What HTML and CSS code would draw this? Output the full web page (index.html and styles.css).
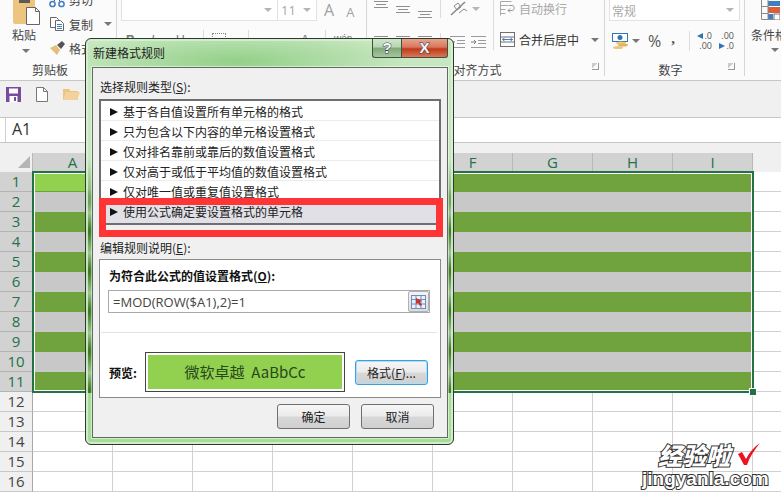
FILE: index.html
```html
<!DOCTYPE html>
<html lang="zh">
<head>
<meta charset="UTF-8">
<title>新建格式规则</title>
<link rel="stylesheet" href="styles.css">
</head>
<body>

<div class="ribbon">
  <div class="group clip-group">
    <div class="group-main clip-main">
      <div class="paste">
        <svg width="30" height="25" viewBox="0 0 30 25"><rect x="1" y="-3" width="22" height="27" rx="2" fill="#eec57f"/><rect x="7" y="-3" width="11" height="6" fill="#5b5b5b"/><path d="M14.5 7.5h9l4 4v13h-13z" fill="#fff" stroke="#666"/><path d="M23.5 7.5v4h4" fill="none" stroke="#666"/></svg>
        <span class="paste-text">粘贴</span>
        <i class="caret"></i>
      </div>
      <div class="clip-list">
        <div class="clip-item clip-cut">
          <svg width="16" height="8" viewBox="0 0 16 8"><circle cx="3.5" cy="4" r="2.6" fill="none" stroke="#3f7ebf" stroke-width="1.5"/><circle cx="12.5" cy="4" r="2.6" fill="none" stroke="#3f7ebf" stroke-width="1.5"/><path d="M5 1l3-3 3 3" fill="none" stroke="#555"/></svg>
          <span>剪切</span>
        </div>
        <div class="clip-item">
          <svg width="16" height="14" viewBox="0 0 16 14"><path d="M1.5.5h6l2 2v8h-8z" fill="#fff" stroke="#666"/><path d="M6.5 3.5h5l3 3v7h-8z" fill="#fff" stroke="#666"/><path d="M8 7.5h5M8 9.5h5M8 11.5h5" stroke="#3f7ebf"/></svg>
          <span>复制</span>
          <i class="caret caret-copy"></i>
        </div>
        <div class="clip-item">
          <svg width="16" height="14" viewBox="0 0 16 14"><path d="M1 7l6-3 4 5-3 5z" fill="#e6bd7c"/><path d="M8 4l5-4 3 3-4 5z" fill="#555"/></svg>
          <span>格式刷</span>
        </div>
      </div>
    </div>
    <div class="group-label clip-label">剪贴板</div>
  </div>

  <div class="group font-group">
    <div class="group-main">
      <div class="font-row">
        <div class="select font-name"><i class="caret caret-light"></i></div>
        <div class="select font-size"><span>11</span><i class="caret caret-light"></i></div>
        <span class="grow big">A</span>
        <span class="grow small">A</span>
      </div>
      <div class="font-row font-row2">
        <b>B</b><em>I</em><u>U</u>
        <span class="pipe pipe-a"></span>
        <span class="dots"></span>
        <span class="pipe pipe-b"></span>
        <span class="bucket">A</span>
        <span class="pipe pipe-c"></span>
        <span class="wen">wén</span>
      </div>
    </div>
    <div class="group-label"></div>
  </div>

  <div class="group align-group">
    <div class="group-main align-main">
      <div class="align-col">
        <div class="align-icons">
          <svg width="58" height="18" viewBox="0 0 58 18"><path d="M0 1.5h14M2 4.5h10M0 7.5h14M22 6.5h14M24 9.5h10M22 12.5h14M44 11.5h14M46 14.5h10M44 17.5h14" stroke="#8f8f8f"/></svg>
        </div>
        <div class="align-icons align-low">
          <svg width="58" height="12" viewBox="0 0 58 12"><path d="M0 1.5h14M22 1.5h14M44 1.5h14" stroke="#8f8f8f"/></svg>
        </div>
      </div>
      <div class="align-col orient-col">
        <div class="orient">
          <svg width="22" height="16" viewBox="0 0 22 16"><path d="M2 14L16 1" stroke="#888" stroke-width="1.5"/><path d="M5 5l4-3 3 4-4 3z" fill="none" stroke="#888"/><path d="M10 12l5-4 3 2" fill="none" stroke="#888"/></svg>
          <i class="caret caret-light"></i>
        </div>
        <div class="indents">
          <svg width="38" height="13" viewBox="0 0 38 13"><path d="M1 1.5h15M8 5.5h8M8 8.5h8M1 12.5h15M22 1.5h15M29 5.5h8M29 8.5h8M22 12.5h15" stroke="#9a9a9a"/><path d="M6 7H1M3 5L1 7l2 2M22 7h5M25 5l2 2-2 2" fill="none" stroke="#7c7c7c"/></svg>
        </div>
      </div>
      <div class="align-col wrap-col">
        <div class="wrap-item wrap-off">
          <svg width="15" height="15" viewBox="0 0 15 15"><path d="M.5.5h11M.5 4.5h8M.5 8.5h5M.5 12.5h5M.5.5v14" fill="none" stroke="#aaa"/><path d="M9 4.5h3c3 0 3 5 0 5H8M10 7.5L8 9.5l2 2" fill="none" stroke="#999"/></svg>
          <span>自动换行</span>
        </div>
        <div class="wrap-item">
          <svg width="15" height="15" viewBox="0 0 15 15"><rect x=".5" y=".5" width="14" height="14" fill="#fff" stroke="#707070"/><path d="M.5 5h14M.5 10h14" stroke="#707070"/><path d="M2.5 7.5h10M4.5 6l-2 1.5 2 1.5M10.500 6l2 1.500-2 1.500" fill="none" stroke="#3f7ebf"/></svg>
          <span>合并后居中</span>
          <i class="caret caret-merge"></i>
        </div>
      </div>
    </div>
    <div class="group-label align-label"><span>对齐方式</span><i class="launcher"></i></div>
  </div>

  <div class="group num-group">
    <div class="group-main">
      <div class="select num-format"><span>常规</span><i class="caret caret-light"></i></div>
      <div class="num-row">
        <svg width="17" height="16" viewBox="0 0 17 16"><rect x=".5" y=".5" width="15" height="8" fill="#fff" stroke="#2f75b5"/><circle cx="8" cy="4.500" r="2.500" fill="#2f75b5"/><ellipse cx="9" cy="10" rx="5" ry="1.500" fill="#eec57f"/><ellipse cx="11" cy="12" rx="5" ry="1.500" fill="#e2b260"/><ellipse cx="6" cy="14.500" rx="5" ry="1.500" fill="#eec57f"/></svg>
        <i class="caret caret-cur"></i>
        <span class="pct">%</span>
        <span class="comma">,</span>
        <span class="pipe num-pipe"></span>
        <span class="dec"><span class="dec-line"><i class="arrow-l"></i>.0</span><span class="dec-line">.00</span></span>
        <span class="dec"><span class="dec-line">.00</span><span class="dec-line"><i class="arrow-r"></i>.0</span></span>
      </div>
    </div>
    <div class="group-label num-label"><span>数字</span><i class="launcher"></i></div>
  </div>

  <div class="group style-group">
    <svg class="cond-icon" width="19" height="20" viewBox="0 0 19 20"><path d="M.5 0v19.500h19" fill="none" stroke="#8a8a8a"/><rect x="7" y="1" width="12" height="5" fill="#3f7ebf"/><rect x="7" y="7" width="12" height="6" fill="#d9603a"/><rect x="7" y="14" width="5" height="5" fill="#3f7ebf"/><path d="M.5 6.500h7M.5 13.500h7M7 0v20" stroke="#8a8a8a"/><rect x="13" y="14" width="6" height="6" fill="#fff" stroke="#777"/></svg>
    <span class="cond-text">条件格式</span>
    <i class="caret"></i>
  </div>
</div>

<div class="qat">
  <svg width="15" height="15" viewBox="0 0 15 15"><path d="M0 0h15v15H0z" fill="#7a4a9e"/><rect x="3" y="1.500" width="9" height="5" fill="#fff"/><rect x="3.500" y="9" width="8" height="6" fill="#fff"/><rect x="8" y="10" width="2" height="4" fill="#7a4a9e"/></svg>
  <svg width="12" height="15" viewBox="0 0 12 15"><path d="M.5.500h7l4 4v10H.5z" fill="#fff" stroke="#777"/><path d="M7.500.500v4h4" fill="none" stroke="#777"/></svg>
  <svg width="17" height="13" viewBox="0 0 17 13"><path d="M0 2h6l1.500 2H15v9H0z" fill="#eec57f"/><path d="M3 5h14l-3 8H0z" fill="#f3d39d"/></svg>
</div>

<div class="fbar"><div class="namebox">A1</div></div>
<div class="fgap"></div>

<div class="sheet">
  <div class="colhead">
    <div class="corner"><i></i></div>
    <span class="col on">A</span><span class="col on">B</span><span class="col on">C</span><span class="col on">D</span><span class="col on">E</span><span class="col on">F</span><span class="col on">G</span><span class="col on">H</span><span class="col on">I</span><span class="col"></span>
  </div>
  <div class="row"><span class="rowhead on">1</span><div class="cells fill-g"><i class="active"></i></div><div class="tail"></div></div>
  <div class="row"><span class="rowhead on">2</span><div class="cells fill-s"></div><div class="tail"></div></div>
  <div class="row"><span class="rowhead on">3</span><div class="cells fill-g"></div><div class="tail"></div></div>
  <div class="row"><span class="rowhead on">4</span><div class="cells fill-s"></div><div class="tail"></div></div>
  <div class="row"><span class="rowhead on">5</span><div class="cells fill-g"></div><div class="tail"></div></div>
  <div class="row"><span class="rowhead on">6</span><div class="cells fill-s"></div><div class="tail"></div></div>
  <div class="row"><span class="rowhead on">7</span><div class="cells fill-g"></div><div class="tail"></div></div>
  <div class="row"><span class="rowhead on">8</span><div class="cells fill-s"></div><div class="tail"></div></div>
  <div class="row"><span class="rowhead on">9</span><div class="cells fill-g"></div><div class="tail"></div></div>
  <div class="row"><span class="rowhead on">10</span><div class="cells fill-s"></div><div class="tail"></div></div>
  <div class="row"><span class="rowhead on">11</span><div class="cells fill-g"></div><div class="tail"></div></div>
  <div class="row"><span class="rowhead">12</span><div class="cells"></div><div class="tail"></div></div>
  <div class="row"><span class="rowhead">13</span><div class="cells"></div><div class="tail"></div></div>
  <div class="row"><span class="rowhead">14</span><div class="cells"></div><div class="tail"></div></div>
  <div class="row"><span class="rowhead">15</span><div class="cells"></div><div class="tail"></div></div>
  <div class="row"><span class="rowhead">16</span><div class="cells"></div><div class="tail"></div></div>
  <div class="selection"><i class="handle"></i></div>
</div>

<div class="dialog">
  <div class="titlebar">
    <span class="title">新建格式规则</span>
    <div class="capbtns">
      <span class="capbtn help">?</span>
      <span class="capbtn close">X</span>
    </div>
  </div>
  <div class="dialog-body">
    <div class="label first-label">选择规则类型(<u>S</u>):</div>
    <div class="rule-list">
      <div class="rule">基于各自值设置所有单元格的格式</div>
      <div class="rule">只为包含以下内容的单元格设置格式</div>
      <div class="rule">仅对排名靠前或靠后的数值设置格式</div>
      <div class="rule">仅对高于或低于平均值的数值设置格式</div>
      <div class="rule">仅对唯一值或重复值设置格式</div>
      <div class="rule rule-on">使用公式确定要设置格式的单元格</div>
    </div>
    <div class="label edit-label">编辑规则说明(<u>E</u>):</div>
    <div class="panel">
      <div class="panel-title">为符合此公式的值设置格式(<u>O</u>):</div>
      <div class="formula">
        <span>=MOD(ROW($A1),2)=1</span>
        <span class="ref-btn">
          <svg width="15" height="14" viewBox="0 0 15 14"><rect x=".5" y=".5" width="14" height="13" fill="#eaf1fa" stroke="#6d8fbe"/><path d="M.5 4.500h14M.5 9h14M5 .5v13M10 .5v13" stroke="#6d8fbe"/><path d="M5 3l6 3-2 1 2 3-2 1-2-3-2 1z" fill="#c8332b"/></svg>
        </span>
      </div>
      <div class="sep"></div>
      <div class="preview-row">
        <span class="preview-label">预览:</span>
        <div class="preview"><div class="preview-fill">微软卓越&nbsp;&nbsp;AaBbCc</div></div>
        <button type="button" class="btn btn-focus">格式(<u>F</u>)...</button>
      </div>
    </div>
    <div class="actions">
      <button type="button" class="btn">确定</button>
      <button type="button" class="btn">取消</button>
    </div>
  </div>
  <div class="redbox"></div>
</div>

<div class="watermark">
  <div class="wm-top">
    <span class="wm-cn">经验啦</span>
    <svg width="24" height="23" viewBox="0 0 24 23"><path d="M1 11l4-2 4 7C12 10 17 4 23 0c-5 6-10 13-13 22H7z" fill="#f01020"/></svg>
  </div>
  <div class="wm-en">jingyanla.com</div>
</div>

</body>
</html>
```

FILE: styles.css
```css
* {
  box-sizing: border-box;
}
html, body {
  margin: 0;
  height: 493px;
  overflow: hidden;
}
body {
  font-family: "Noto Sans CJK SC", "Noto Sans", sans-serif;
  font-size: 12px;
  color: #222;
  background: #fff;
  position: relative;
}
i {
  display: block;
}

/* ribbon */
.ribbon {
  display: flex;
  height: 81px;
  background: #fbfbfb;
  border-bottom: 1px solid #c6c6c6;
  overflow: hidden;
  color: #444;
}
.group {
  height: 76px;
  border-right: 1px solid #d6d6d6;
  flex: none;
}
.group-main {
  height: 63px;
}
.group-label {
  height: 13px;
  line-height: 14px;
  text-align: center;
  position: relative;
}
.clip-label {
  padding-right: 16px;
}
.caret {
  width: 0;
  height: 0;
  border-left: 4px solid transparent;
  border-right: 4px solid transparent;
  border-top: 4px solid #777;
}
.caret-light {
  border-top-color: #b5b5b5;
}
.clip-group {
  width: 117px;
}
.clip-main {
  display: flex;
}
.paste {
  width: 48px;
  padding-left: 12px;
  display: flex;
  flex-direction: column;
}
.paste-text {
  margin-top: 1px;
  line-height: 18px;
  font-size: 12px;
}
.paste .caret {
  margin: 5px 0 0 10px;
}
.clip-list {
  padding-left: 1px;
}
.clip-item {
  display: flex;
  align-items: center;
  gap: 4px;
  height: 14px;
  margin-bottom: 9px;
  white-space: nowrap;
}
.clip-item span {
  width: 26px;
  font-size: 12px;
}
.clip-cut {
  height: 8px;
  margin-bottom: 9px;
  align-items: flex-end;
}
.clip-item:last-child {
  margin-top: 10px;
}
.caret-copy {
  margin-left: 5px;
}
.font-group {
  width: 250px;
  padding-left: 4px;
}
.font-row {
  display: flex;
  height: 21px;
}
.select {
  border: 1px solid #e2e2e2;
  border-top: 0;
  height: 21px;
  background: #fff;
  display: flex;
  align-items: center;
  justify-content: flex-end;
  padding-right: 5px;
}
.font-name {
  width: 157px;
}
.font-size {
  width: 40px;
  margin-left: -1px;
  justify-content: space-between;
  padding-left: 3px;
  color: #a8a8a8;
  font-family: "Open Sans", sans-serif;
  font-size: 13px;
}
.grow {
  color: #a2a2a2;
  font-family: "Open Sans", sans-serif;
  line-height: 20px;
}
.big {
  font-size: 16px;
  margin-left: 7px;
}
.small {
  font-size: 13px;
  margin-left: 12px;
  padding-top: 2px;
}
.font-row2 {
  margin-top: 12px;
  height: 10px;
  align-items: flex-start;
  font-family: "Liberation Sans", sans-serif;
  font-size: 12px;
  color: #777;
}
.font-row2 b, .font-row2 em, .font-row2 u {
  width: 25px;
  padding-left: 5px;
}
.pipe {
  width: 1px;
  height: 20px;
  background: #dcdcdc;
  flex: none;
}
.pipe-a {
  margin: -3px 0 0 7px;
}
.dots {
  width: 14px;
  height: 8px;
  margin: 0 0 0 8px;
  border: 1px dotted #888;
}
.pipe-b {
  margin: -3px 0 0 22px;
}
.bucket {
  margin-left: 52px;
  width: 22px;
}
.pipe-c {
  margin: -3px 0 0 2px;
}
.wen {
  margin-left: 8px;
  font-size: 10px;
}
.align-group {
  width: 238px;
  padding-left: 7px;
}
.align-main {
  display: flex;
}
.align-col {
  height: 50px;
}
.align-icons {
  width: 67px;
  height: 18px;
  border-right: 1px solid #dcdcdc;
}
.align-low {
  margin-top: 15px;
  height: 17px;
}
.orient-col {
  width: 53px;
  border-right: 1px solid #dcdcdc;
  padding-left: 8px;
}
.orient {
  display: flex;
  align-items: center;
  gap: 1px;
  height: 18px;
}
.indents {
  margin-top: 16px;
}
.wrap-col {
  padding-left: 6px;
}
.wrap-item {
  display: flex;
  align-items: center;
  gap: 4px;
  height: 17px;
  white-space: nowrap;
  font-size: 12px;
}
.wrap-item:last-child {
  margin-top: 14px;
  color: #333;
}
.wrap-off {
  color: #a8a8a8;
}
.caret-merge {
  margin-left: 8px;
}
.launcher {
  position: absolute;
  right: 5px;
  top: 0;
  width: 7px;
  height: 7px;
  border-right: 1px solid #999;
  border-bottom: 1px solid #999;
  background: linear-gradient(135deg, #ccc 0 45%, transparent 45%);
}
.align-label {
  padding-right: 23px;
}
.num-group {
  width: 140px;
  padding: 0 4px;
}
.num-label {
  padding-right: 8px;
}
.num-format {
  width: 131px;
  justify-content: space-between;
  padding-left: 2px;
  border-color: #e2e2e2;
  color: #a8a8a8;
  font-size: 12px;
}
.num-row {
  display: flex;
  align-items: center;
  margin-top: 10px;
  padding-left: 3px;
  height: 20px;
}
.caret-cur {
  margin-left: 3px;
}
.pct {
  margin-left: 8px;
  font-family: "Open Sans", sans-serif;
  font-size: 16px;
  color: #555;
}
.comma {
  margin: -5px 0 0 10px;
  font-family: "Liberation Serif", serif;
  font-weight: bold;
  font-size: 15px;
  color: #555;
}
.num-pipe {
  margin-left: 14px;
}
.dec {
  margin-left: 7px;
  width: 15px;
  font-family: "Open Sans", sans-serif;
  font-size: 9px;
  line-height: 10px;
  color: #555;
  text-align: right;
}
.dec-line {
  display: flex;
  justify-content: flex-end;
  align-items: center;
  gap: 1px;
}
.arrow-l, .arrow-r {
  width: 0;
  height: 0;
  border-top: 3px solid transparent;
  border-bottom: 3px solid transparent;
}
.arrow-l {
  border-right: 6px solid #2f75b5;
}
.arrow-r {
  border-left: 6px solid #2f75b5;
}
.style-group {
  border-right: 0;
  padding-left: 6px;
  white-space: nowrap;
}
.cond-icon {
  display: block;
  margin-left: 10px;
}
.cond-text {
  display: block;
  margin-top: 6px;
  line-height: 17px;
}
.style-group .caret {
  margin: 5px 0 0 20px;
}

/* quick access + formula bar */
.qat {
  display: flex;
  align-items: flex-start;
  gap: 15px;
  height: 36px;
  padding: 6px 0 0 6px;
  background: #f0f0f0;
}
.fbar {
  height: 26px;
  background: #fff;
  border-top: 1px solid #c6c6c6;
  border-bottom: 1px solid #c6c6c6;
}
.namebox {
  width: 85px;
  margin-left: 5px;
  height: 24px;
  border-left: 1px solid #d0d0d0;
  padding-left: 6px;
  font-family: "Open Sans", sans-serif;
  font-size: 16px;
  line-height: 23px;
  color: #333;
}
.fgap {
  height: 10px;
  background: #f0f0f0;
}

/* sheet */
.sheet {
  position: relative;
}
.colhead {
  display: flex;
  height: 19px;
  background: #f0f0f0;
}
.corner {
  width: 33px;
  background: #f0f0f0;
  border-right: 1px solid #b8b8b8;
  position: relative;
}
.corner i {
  width: 0;
  height: 0;
  margin: 3px 0 0 18px;
  border-left: 12px solid transparent;
  border-bottom: 12px solid #b5b5b5;
}
.col {
  width: 80px;
  height: 19px;
  flex: none;
  text-align: center;
  font-family: "Open Sans", sans-serif;
  font-size: 15px;
  line-height: 19px;
  border-right: 1px solid #b8b8b8;
}
.col.on {
  background: #d2d2d2;
  color: #217346;
}
.col:last-child {
  border-right: 0;
  flex: 1;
}
.row {
  display: flex;
  height: 20px;
}
.rowhead {
  width: 33px;
  flex: none;
  text-align: center;
  font-family: "Open Sans", sans-serif;
  font-size: 15px;
  line-height: 19px;
  background: #f0f0f0;
  color: #444;
  border-right: 1px solid #a8a8a8;
  border-bottom: 1px solid #c8c8c8;
}
.rowhead.on {
  background: #d2d2d2;
  color: #217346;
  border-bottom-color: #b4b4b4;
}
.cells {
  width: 720px;
  flex: none;
  border-bottom: 1px solid #d0d0d0;
  background-image: linear-gradient(to right, transparent 79px, #d0d0d0 79px);
  background-size: 80px 100%;
}
.tail {
  flex: 1;
  border-bottom: 1px solid #d0d0d0;
}
.fill-g {
  background: #70a33e;
  border-bottom: 0;
}
.fill-s {
  background: #c8c8c8;
  border-bottom: 0;
}
.active {
  width: 80px;
  height: 20px;
  background: #92d050;
  border-bottom: 1px solid #6fa33c;
}
.selection {
  position: absolute;
  left: 32px;
  top: 18px;
  width: 722px;
  height: 222px;
  border: 2px solid #217346;
  box-shadow: inset 0 0 0 1px #fff;
}
.handle {
  position: absolute;
  right: -4px;
  bottom: -4px;
  width: 6px;
  height: 6px;
  background: #217346;
  outline: 1px solid #fff;
}

/* dialog */
.dialog {
  position: absolute;
  left: 85px;
  top: 38px;
  width: 369px;
  height: 407px;
  border: 1px solid #2c3a2c;
  border-radius: 6px;
  padding: 0 5px 6px 6px;
  background-color: #a4dc98;
  background-image:
    linear-gradient(to bottom, #c6e7bf 0, #8fbf83 30px, transparent 46px),
    repeating-linear-gradient(to bottom, #9cc592 0, #3f7f24 16px, #3f7f24 20px, #9cc592 40px),
    radial-gradient(ellipse 170px 30px at 150px 22px, #93d088 0, #b6dfae 70%, #c6e7bf 100%);
  background-repeat: no-repeat;
  background-size: 100% 46px, 100% 220px, 100% 140px;
  background-position: 0 120px, 0 134px, 0 0;
  box-shadow: inset 0 0 0 2px rgba(216, 238, 211, .85);
}
.titlebar {
  display: flex;
  justify-content: space-between;
  height: 28px;
  padding-left: 1px;
}
.title {
  font-size: 12px;
  line-height: 27px;
  color: #222;
}
.capbtns {
  display: flex;
  height: 19px;
  margin-right: 0;
}
.capbtn {
  height: 19px;
  display: block;
  text-align: center;
  font-family: "Liberation Sans", sans-serif;
  font-weight: bold;
  font-size: 15px;
  line-height: 18px;
  color: #f6f6fa;
  -webkit-text-stroke: 1px #3a4050;
  paint-order: stroke fill;
  border: 1px solid #44503f;
  border-top: 0;
}
.help {
  width: 29px;
  border-radius: 0 0 0 3px;
  border-right: 0;
  background: linear-gradient(#cfe6cb 0, #b7d6b1 45%, #7ea778 50%, #a6c6a0 100%);
}
.close {
  width: 47px;
  border-radius: 0 0 3px 0;
  background: linear-gradient(#e6a48f 0, #d9785c 45%, #bf3a17 55%, #d9785c 100%);
}
.dialog-body {
  height: 371px;
  background: #f0f0f0;
  border: 1px solid #5f6b5f;
  padding: 0 6px;
  box-shadow: 0 0 0 1px rgba(255, 255, 255, .5);
}
.label {
  line-height: 16px;
  padding-left: 1px;
  color: #222;
}
.first-label {
  margin-top: 11px;
}
.rule-list {
  margin-top: 4px;
  height: 126px;
  background: #fff;
  border: 2px solid #6e6e6e;
  overflow: hidden;
}
.rule {
  height: 20px;
  padding-left: 22px;
  line-height: 22px;
  border-bottom: 1px solid #ececec;
  position: relative;
  white-space: nowrap;
}
.rule::before {
  content: "";
  position: absolute;
  left: 9px;
  top: 7px;
  border-left: 8px solid #111;
  border-top: 4px solid transparent;
  border-bottom: 4px solid transparent;
}
.rule-on {
  height: 22px;
  border-bottom: 0;
  background: #e0e0e6;
}
.edit-label {
  margin-top: 15px;
}
.panel {
  margin-top: 3px;
  height: 139px;
  background: #fff;
  border: 1px solid #8a8a8a;
  padding: 8px 10px 0 8px;
}
.panel-title {
  font-weight: bold;
  line-height: 16px;
  padding-left: 1px;
  color: #111;
}
.formula {
  margin-top: 6px;
  height: 23px;
  border: 1px solid #aaa;
  display: flex;
  align-items: center;
  justify-content: space-between;
  padding-left: 4px;
  font-family: "Open Sans", sans-serif;
  font-size: 13px;
  color: #444;
}
.ref-btn {
  width: 21px;
  height: 21px;
  display: flex;
  align-items: center;
  justify-content: center;
  border: 1px solid #b0b0b0;
  border-radius: 2px;
  background: linear-gradient(#f4f4f4, #dcdcdc);
}
.sep {
  margin: 19px -7px 0;
  height: 1px;
  background: #e2e2e2;
}
.preview-row {
  display: flex;
  align-items: center;
  margin-top: 19px;
  height: 40px;
}
.preview-label {
  width: 37px;
  padding-left: 1px;
  font-weight: bold;
  color: #111;
}
.preview {
  width: 200px;
  height: 40px;
  padding: 2px;
  border: 1px solid #444;
}
.preview-fill {
  height: 34px;
  background: #92d050;
  color: #29481a;
  text-align: center;
  font-size: 15px;
  line-height: 33px;
}
.btn {
  display: block;
  width: 73px;
  height: 25px;
  padding: 0;
  border: 1px solid #707070;
  border-radius: 3px;
  font-family: inherit;
  font-size: 12px;
  color: #222;
  background: linear-gradient(#f6f6f6 0, #ebebeb 48%, #d8d8d8 52%, #cfcfcf 100%);
  white-space: nowrap;
}
.btn-focus {
  margin-left: 10px;
  border: 1px solid #3c9fdc;
  box-shadow: inset 0 0 0 1px #a6e0fa;
}
.actions {
  display: flex;
  justify-content: flex-end;
  gap: 11px;
  margin: 6px 7px 0 0;
}
.redbox {
  position: absolute;
  left: 13px;
  top: 159px;
  width: 344px;
  height: 39px;
  border: 7px solid #ff3535;
}

/* watermark */
.watermark {
  position: absolute;
  left: 642px;
  top: 440px;
  width: 130px;
  font-family: "Noto Sans CJK SC", sans-serif;
  font-weight: 900;
  color: #fff;
  -webkit-text-stroke: 2px #333;
  paint-order: stroke fill;
}
.wm-top {
  display: flex;
  align-items: center;
  height: 29px;
  padding-left: 16px;
  gap: 7px;
}
.wm-cn {
  font-size: 24px;
  line-height: 29px;
  font-style: italic;
}
.wm-en {
  font-family: "Liberation Sans", sans-serif;
  font-weight: bold;
  font-size: 19px;
  line-height: 20px;
  white-space: nowrap;
}
```
